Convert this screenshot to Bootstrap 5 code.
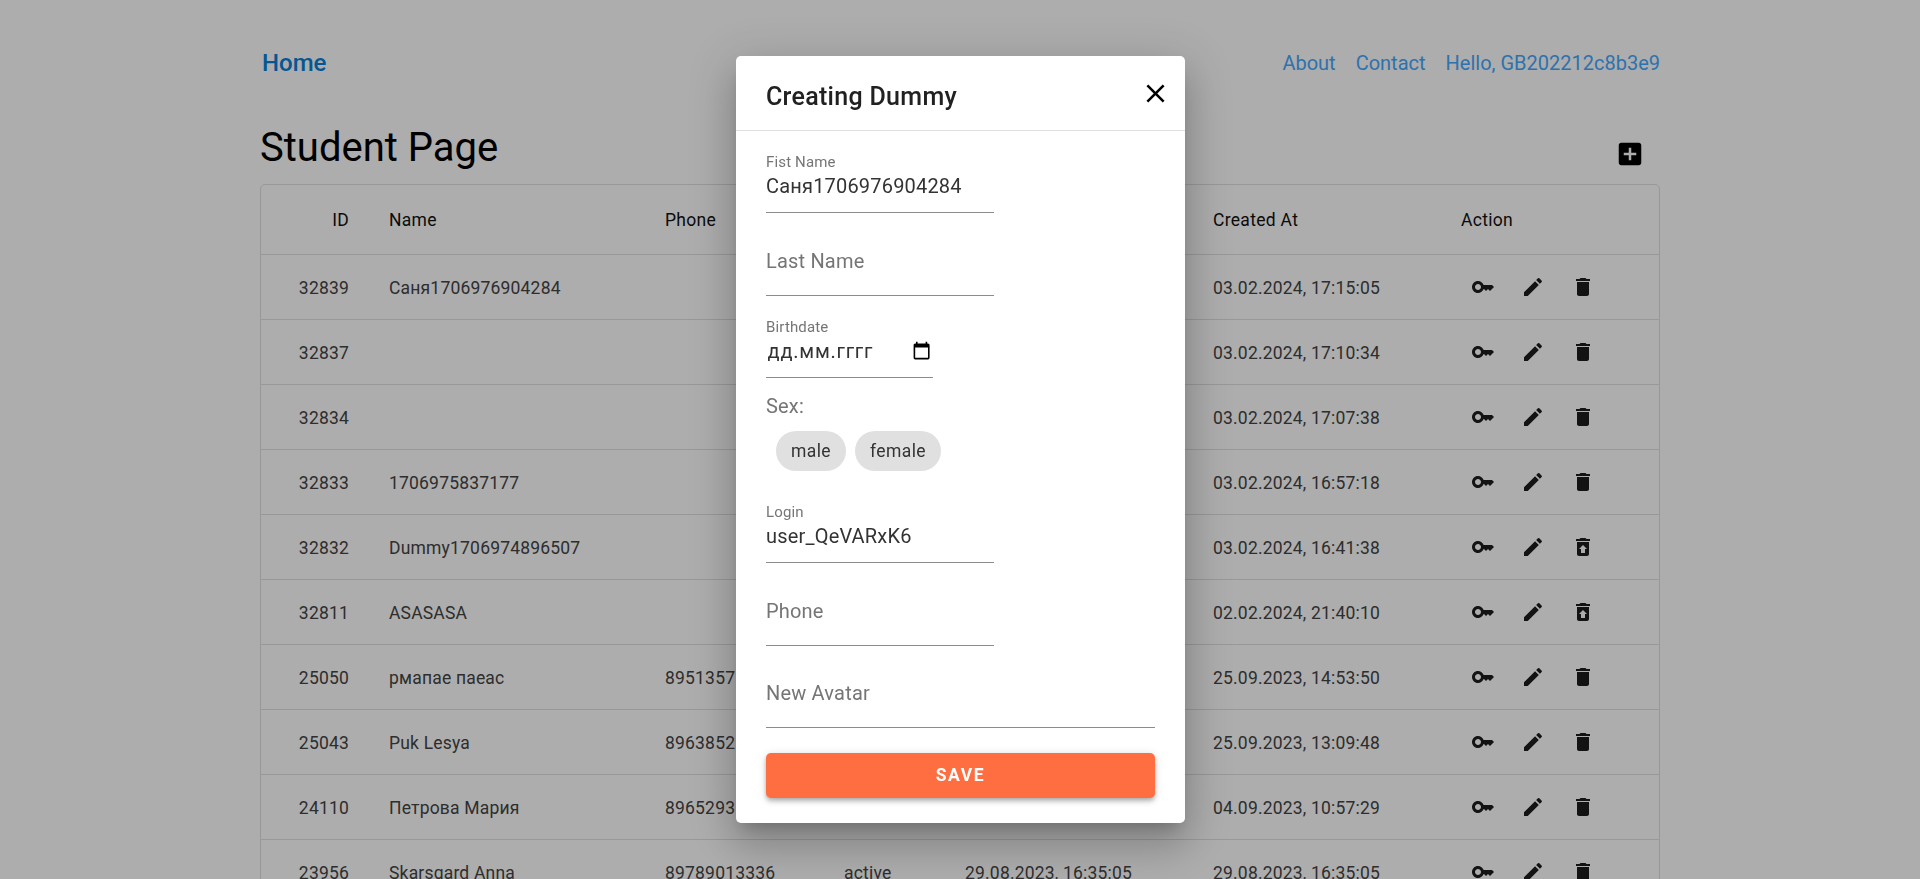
<!DOCTYPE html>
<html lang="en">
<head>
    <meta charset="UTF-8">
    <title>Student Page</title>
    <link href="https://cdn.jsdelivr.net/npm/bootstrap@5.3.0/dist/css/bootstrap.min.css" rel="stylesheet">
    <script src="https://cdn.jsdelivr.net/npm/bootstrap@5.3.0/dist/js/bootstrap.bundle.min.js"></script>
    <style>
        body { font-family: Roboto, "Liberation Sans", sans-serif; color: #212121; background: #fff; }

        .page-wrap { max-width: 1400px; padding: 0; }

        /* top nav */
        .top-nav { height: 64px; margin-top: 31px; padding: 0 0 0 2px; }
        .top-nav .navbar-brand { margin: 0; padding: 0; font-size: 24px; font-weight: 500; color: #0780d8; }
        .top-links { gap: 20px; }
        .top-nav .nav-link { padding: 0; font-size: 20px; color: #45a9ff; }

        /* heading */
        .head-row { height: 89px; }
        .page-title { margin: 0 0 10px; font-size: 40px; font-weight: 400; line-height: 52.5px; color: #000; }
        .add-btn { margin: 0 15px 15px 0; line-height: 0; }
        .add-btn svg { width: 30px; height: 30px; fill: #000; }

        /* table */
        .table-box { border: 1px solid #e0e0e0; border-radius: 5px; }
        .student-table { margin: 0; table-layout: fixed; border-collapse: separate; border-spacing: 0; --bs-table-border-color: #e0e0e0; --bs-table-color: #444; }
        .student-table.table > :not(caption) > * { border-width: 0; }
        .student-table th, .student-table td { padding: 2px 20px 0; vertical-align: middle; font-size: 17.5px; letter-spacing: .19px; white-space: nowrap; }
        .student-table th { height: 70px; font-weight: 400; letter-spacing: .3px; color: #111; }
        .student-table td { height: 65px; font-weight: 400; }
        .student-table td.act-cell { padding-top: 0; }
        .w-id { width: 108px; }
        .w-name { width: 276px; }
        .w-phone { width: 179px; }
        .w-status { width: 121px; }
        .w-date { width: 248px; }
        .w-action { width: 218px; }
        .act-row { gap: 6px; }
        .act-btn { width: 44px; height: 44px; border: 0; background: none; padding: 10px; line-height: 0; }
        .act-btn svg { width: 24px; height: 24px; fill: #1c1c1c; }

        /* modal */
        .modal-backdrop.show { opacity: .32; }
        .dummy-modal .modal-dialog { max-width: 449px; margin-left: 736px; }
        .dummy-modal .modal-content { border: 0; border-radius: 5px; box-shadow: 0 11px 15px -7px rgba(0,0,0,.2), 0 24px 38px 3px rgba(0,0,0,.14), 0 9px 46px 8px rgba(0,0,0,.12); }
        .dummy-modal .modal-header { height: 75px; padding: 24px 14.5px 10px 30px; align-items: flex-start; border-bottom: 1px solid #e0e0e0; }
        .dummy-modal .modal-title { font-size: 25px; font-weight: 500; line-height: 34px; letter-spacing: .3px; color: #212121; }
        .close-x { border: 0; background: none; padding: 0; margin-top: -2.5px; line-height: 0; }
        .close-x svg { width: 31px; height: 31px; fill: #000; }
        .dummy-modal .modal-body { padding: 16px 30px 25px; }

        .fld { height: 66px; margin-bottom: 16px; width: 228px; border-bottom: 1px solid #8c8c8c; }
        .fld-wide { width: 100%; }
        .fld-date { width: 167px; }
        .fld label { display: block; font-size: 15px; line-height: 18px; letter-spacing: .15px; color: #757575; }
        .fld-input { display: block; width: 100%; height: 32px; padding: 0; border: 0; outline: 0; background: none; font-size: 20px; letter-spacing: .1875px; color: #333; }
        .fld-input::placeholder { color: #757575; opacity: 1; }
        .fld-filled { padding-top: 6px; margin-bottom: 17px; }
        .fld-filled .fld-input { margin-top: -1px; }
        .fld-empty { padding-top: 15px; }
        .fld-date { margin-bottom: 16px; }
        .fld-date .fld-input { padding-left: 1.5px; letter-spacing: .75px; }
        .cal-icon { width: 19.2px; height: 19.2px; fill: #000; flex: none; margin: -2px 2px 0 0; }

        .sex-label { font-size: 20px; line-height: 24px; letter-spacing: .1875px; color: #757575; }
        .chip-row { gap: 9px; margin: 13px 0 26px 10px; }
        .sex-chip { height: 40px; padding: 0 15px; border-radius: 20px; background: #e0e0e0; font-size: 17.5px; line-height: 40px; letter-spacing: .4px; color: #333; }

        .save-btn { height: 45px; margin-top: 25px; padding: 0; border: 0; border-radius: 5px; font-size: 17.5px; font-weight: 700; letter-spacing: 1.6px; color: #fff; background: #ff6e40; box-shadow: 0 2px 4px -1px rgba(0,0,0,.2), 0 4px 5px rgba(0,0,0,.14), 0 1px 10px rgba(0,0,0,.12); }
        .save-btn:hover { color: #fff; background: #ff6e40; }
    </style>
</head>
<body class="overflow-hidden">

<div class="container page-wrap">
    <nav class="navbar top-nav">
        <a class="navbar-brand" href="#">Home</a>
        <div class="d-flex top-links">
            <a class="nav-link" href="#">About</a>
            <a class="nav-link" href="#">Contact</a>
            <a class="nav-link" href="#">Hello, GB202212c8b3e9</a>
        </div>
    </nav>

    <div class="d-flex justify-content-between align-items-end head-row">
        <h1 class="page-title">Student Page</h1>
        <div class="add-btn">
            <svg viewBox="0 0 24 24"><path d="M19 3H5c-1.11 0-2 .9-2 2v14c0 1.1.89 2 2 2h14c1.1 0 2-.9 2-2V5c0-1.1-.9-2-2-2zm-2 10h-4v4h-2v-4H7v-2h4V7h2v4h4v2z"/></svg>
        </div>
    </div>

    <div class="table-box">
        <table class="table student-table">
            <thead>
            <tr>
                <th class="w-id text-end">ID</th>
                <th class="w-name">Name</th>
                <th class="w-phone">Phone</th>
                <th class="w-status">Status</th>
                <th class="w-date">Updated At</th>
                <th class="w-date">Created At</th>
                <th class="w-action">Action</th>
            </tr>
            </thead>
            <tbody id="student-rows"></tbody>
        </table>
    </div>
</div>

<div class="modal-backdrop show"></div>

<div class="modal d-block dummy-modal">
    <div class="modal-dialog modal-dialog-centered">
        <div class="modal-content">
            <div class="modal-header justify-content-between">
                <div class="modal-title">Creating Dummy</div>
                <button type="button" class="close-x" aria-label="Close">
                    <svg viewBox="0 0 24 24"><path d="M19 6.41 17.59 5 12 10.59 6.41 5 5 6.41 10.59 12 5 17.59 6.41 19 12 13.41 17.59 19 19 17.59 13.41 12z"/></svg>
                </button>
            </div>
            <div class="modal-body">
                <div class="fld fld-filled">
                    <label for="f-first">Fist Name</label>
                    <input id="f-first" class="fld-input" type="text" value="Саня1706976904284">
                </div>
                <div class="fld fld-empty">
                    <input class="fld-input" type="text" placeholder="Last Name">
                </div>
                <div class="fld fld-filled fld-date">
                    <label for="f-birth">Birthdate</label>
                    <div class="d-flex align-items-center">
                        <input id="f-birth" class="fld-input" type="text" value="дд.мм.гггг">
                        <svg class="cal-icon" viewBox="0 0 24 24"><path d="M20 3h-1V1h-2v2H7V1H5v2H4c-1.1 0-2 .9-2 2v16c0 1.1.9 2 2 2h16c1.1 0 2-.9 2-2V5c0-1.1-.9-2-2-2zm0 18H4V8h16v13z"/></svg>
                    </div>
                </div>
                <div class="sex-label">Sex:</div>
                <div class="d-flex chip-row">
                    <span class="sex-chip">male</span>
                    <span class="sex-chip">female</span>
                </div>
                <div class="fld fld-filled">
                    <label for="f-login">Login</label>
                    <input id="f-login" class="fld-input" type="text" value="user_QeVARxK6">
                </div>
                <div class="fld fld-empty">
                    <input class="fld-input" type="text" placeholder="Phone">
                </div>
                <div class="fld fld-empty fld-wide">
                    <input class="fld-input" type="text" placeholder="New Avatar">
                </div>
                <button type="button" class="btn save-btn w-100 d-block">SAVE</button>
            </div>
        </div>
    </div>
</div>

<script>
    const icones = {
        chave: 'M21 10h-8.35C11.83 7.67 9.61 6 7 6c-3.31 0-6 2.69-6 6s2.69 6 6 6c2.61 0 4.83-1.67 5.65-4H13l2 2 2-2 2 2 4-4.04L21 10zM7 15c-1.65 0-3-1.35-3-3s1.35-3 3-3 3 1.35 3 3-1.35 3-3 3z',
        editar: 'M3 17.25V21h3.75L17.81 9.94l-3.75-3.75L3 17.25zM20.71 7.04c.39-.39.39-1.02 0-1.41l-2.34-2.34a.9959.9959 0 0 0-1.41 0l-1.83 1.83 3.75 3.75 1.83-1.83z',
        lixo: 'M6 19c0 1.1.9 2 2 2h8c1.1 0 2-.9 2-2V7H6v12zM19 4h-3.5l-1-1h-5l-1 1H5v2h14V4z',
        restaurar: 'M19 4h-3.5l-1-1h-5l-1 1H5v2h14zM6 7v12c0 1.1.9 2 2 2h8c1.1 0 2-.9 2-2V7zm8 7v4h-4v-4H8l4-4 4 4z'
    };

    const alunos = [
        { id: 32839, nome: 'Саня1706976904284', criado: '03.02.2024, 17:15:05' },
        { id: 32837, nome: '', criado: '03.02.2024, 17:10:34' },
        { id: 32834, nome: '', criado: '03.02.2024, 17:07:38' },
        { id: 32833, nome: '1706975837177', criado: '03.02.2024, 16:57:18' },
        { id: 32832, nome: 'Dummy1706974896507', criado: '03.02.2024, 16:41:38', dummy: true },
        { id: 32811, nome: 'ASASASA', criado: '02.02.2024, 21:40:10', dummy: true },
        { id: 25050, nome: 'рмапае паеас', fone: '8951357', criado: '25.09.2023, 14:53:50' },
        { id: 25043, nome: 'Puk Lesya', fone: '8963852', criado: '25.09.2023, 13:09:48' },
        { id: 24110, nome: 'Петрова Мария', fone: '8965293', criado: '04.09.2023, 10:57:29' },
        { id: 23956, nome: 'Skarsgard Anna', fone: '89789013336', status: 'active', alterado: '29.08.2023, 16:35:05', criado: '29.08.2023, 16:35:05' }
    ];

    function icone(nome) {
        return `<button type="button" class="act-btn"><svg viewBox="0 0 24 24"><path d="${icones[nome]}"/></svg></button>`;
    }

    function renderizarTabela() {
        const tabela = document.getElementById('student-rows');
        alunos.forEach(a => {
            const linha = document.createElement('tr');
            linha.innerHTML = `
                <td class="text-end">${a.id}</td>
                <td>${a.nome}</td>
                <td>${a.fone || ''}</td>
                <td>${a.status || ''}</td>
                <td>${a.alterado || ''}</td>
                <td>${a.criado}</td>
                <td class="act-cell"><div class="d-flex act-row">${icone('chave')}${icone('editar')}${icone(a.dummy ? 'restaurar' : 'lixo')}</div></td>
            `;
            tabela.appendChild(linha);
        });
    }

    renderizarTabela();
</script>

</body>
</html>
